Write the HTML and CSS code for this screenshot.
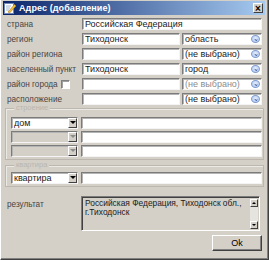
FILE: index.html
```html
<!DOCTYPE html>
<html lang="ru">
<head>
    <meta charset="UTF-8">
    <title>Адрес (добавление)</title>
    <link rel="stylesheet" href="styles.css">
</head>
<body>
    <div class="window">
        <div class="titlebar">
            <svg class="app-icon" width="12" height="12" viewBox="0 0 12 12">
                <rect x="0.5" y="1.5" width="9" height="10" fill="#ffffff" stroke="#6f86b8"/>
                <line x1="2" y1="4" x2="7" y2="4" stroke="#9fb2d8"/>
                <line x1="2" y1="6" x2="6" y2="6" stroke="#9fb2d8"/>
                <line x1="2" y1="8" x2="5" y2="8" stroke="#9fb2d8"/>
                <path d="M4 10 L10.5 2.5 L12 4 L5.5 11 Z" fill="#f2c23a" stroke="#b07818" stroke-width="0.6"/>
            </svg>
            <span class="title">Адрес (добавление)</span>
            <span class="close">×</span>
        </div>

        <div class="form">
            <div class="row">
                <span class="label">страна</span>
                <div class="field span2">Российская Федерация</div>
            </div>
            <div class="row">
                <span class="label">регион</span>
                <div class="field">Тиходонск</div>
                <div class="combo"><span>область</span><i class="drop"></i></div>
            </div>
            <div class="row">
                <span class="label">район региона</span>
                <div class="field"></div>
                <div class="combo"><span>(не выбрано)</span><i class="drop"></i></div>
            </div>
            <div class="row">
                <span class="label">населенный пункт</span>
                <div class="field">Тиходонск</div>
                <div class="combo"><span>город</span><i class="drop"></i></div>
            </div>
            <div class="row">
                <span class="label">район города <i class="check"></i></span>
                <div class="field"></div>
                <div class="combo off"><span>(не выбрано)</span><i class="drop"></i></div>
            </div>
            <div class="row">
                <span class="label">расположение</span>
                <div class="field"></div>
                <div class="combo"><span>(не выбрано)</span><i class="drop"></i></div>
            </div>

            <!-- дом / строение -->
            <div class="group first">
                <span class="legend">строение</span>
                <div class="grow">
                    <div class="select"><span>дом</span><i class="arrow"></i></div>
                    <div class="field"></div>
                </div>
                <div class="grow">
                    <div class="select off"><span></span><i class="arrow"></i></div>
                    <div class="field"></div>
                </div>
                <div class="grow">
                    <div class="select off"><span></span><i class="arrow"></i></div>
                    <div class="field"></div>
                </div>
            </div>

            <!-- квартира -->
            <div class="group second">
                <span class="legend">квартира</span>
                <div class="grow">
                    <div class="select"><span>квартира</span><i class="arrow"></i></div>
                    <div class="field"></div>
                </div>
            </div>

            <div class="result-row">
                <span class="label">результат</span>
                <div class="result">
                    <div class="result-text">Российская Федерация, Тиходонск обл., г.Тиходонск</div>
                    <div class="scroll">
                        <i class="sbtn up"></i>
                        <i class="sbtn down"></i>
                    </div>
                </div>
            </div>

            <div class="actions">
                <button type="button" class="ok">Ok</button>
            </div>
        </div>
    </div>
</body>
</html>
```

FILE: styles.css
```css
body {
    margin: 0;
    font-family: "Liberation Sans", Arial, sans-serif;
    font-size: 9px;
    color: #000000;
}
.window {
    width: 269px;
    height: 260px;
    box-sizing: border-box;
    background-color: #d4d0c8;
    border-left: 1px solid #ffffff;
    border-right: 1px solid #404040;
    border-bottom: 1px solid #404040;
    box-shadow: inset -1px -1px #808080;
    padding: 1px 3px 0 2px;
}
.titlebar {
    height: 14px;
    display: flex;
    align-items: center;
    gap: 3px;
    padding: 0 2px 0 1px;
    background: linear-gradient(to right, #0a246a, #a6caf0);
    color: #ffffff;
    font-weight: bold;
}
.app-icon {
    flex: none;
}
.title {
    flex: 1;
    font-size: 9px;
    letter-spacing: 0.1px;
}
.close {
    width: 10px;
    height: 10px;
    line-height: 9px;
    text-align: center;
    background-color: #d4d0c8;
    color: #000000;
    font-size: 10px;
    font-weight: bold;
    border: 1px solid;
    border-color: #ffffff #404040 #404040 #ffffff;
    box-sizing: border-box;
}
.form {
    padding: 3px 0 0 4px;
}
.row {
    display: grid;
    grid-template-columns: 75px 98px 82px;
    height: 12px;
    margin-bottom: 3px;
    align-items: center;
}
.label {
    color: #454545;
    font-size: 8.2px;
    display: flex;
    align-items: center;
    white-space: nowrap;
}
.check {
    width: 9px;
    height: 9px;
    margin-left: 3px;
    box-sizing: border-box;
    background-color: #ffffff;
    border: 1px solid;
    border-color: #808080 #ffffff #ffffff #808080;
    box-shadow: inset 1px 1px #a0a0a0;
}
.field, .combo, .select {
    height: 12px;
    box-sizing: border-box;
    background-color: #ffffff;
    border: 1px solid;
    border-color: #7b7b7b #f4f4f4 #f4f4f4 #7b7b7b;
    box-shadow: inset 1px 1px #b4b4b4;
    padding: 0 2px;
    line-height: 10px;
    white-space: nowrap;
    overflow: hidden;
    color: #1a1a1a;
}
.span2 {
    grid-column: 2 / 4;
}
.combo {
    margin-left: 2px;
    display: flex;
    align-items: center;
    justify-content: space-between;
    padding-right: 1px;
}
.combo.off span {
    color: #8c8c8c;
}
.drop {
    width: 9px;
    height: 8px;
    border-radius: 50%;
    background: radial-gradient(circle at 50% 40%, #e6eefc, #a9c0ea);
    border: 1px solid #7f9dd2;
    box-sizing: border-box;
    position: relative;
}
.drop::after {
    content: "";
    position: absolute;
    left: 2px;
    top: 2px;
    width: 3px;
    height: 2px;
    border-bottom: 1px solid #2d4f91;
    border-right: 1px solid #2d4f91;
    transform: rotate(45deg) scale(0.6);
}
.group {
    position: relative;
    margin: 0 1px 0 -2px;
    border: 1px solid #bcb8b0;
    box-shadow: inset 1px 1px #ebe9e4;
    padding: 0 1px 0 5px;
}
.group.first {
    padding-top: 8px;
    padding-bottom: 2px;
}
.group.second {
    margin-top: 5px;
    padding-top: 6px;
    padding-bottom: 2px;
}
.legend {
    position: absolute;
    top: -6px;
    left: 8px;
    padding: 0 2px;
    background-color: #d4d0c8;
    color: #bab6ae;
    font-size: 7.5px;
}
.grow {
    display: grid;
    grid-template-columns: 67px 1fr;
    column-gap: 3px;
    height: 12px;
    margin-bottom: 2px;
}
.grow:last-child {
    margin-bottom: 0;
}
.select {
    display: flex;
    align-items: center;
    justify-content: space-between;
    padding-right: 0;
}
.select.off {
    background-color: #d4d0c8;
}
.arrow {
    width: 9px;
    height: 10px;
    box-sizing: border-box;
    background-color: #d4d0c8;
    border: 1px solid;
    border-color: #ffffff #404040 #404040 #ffffff;
    position: relative;
}
.arrow::after {
    content: "";
    position: absolute;
    left: 1px;
    top: 2px;
    border-left: 3px solid transparent;
    border-right: 3px solid transparent;
    border-top: 3px solid #000000;
}
.select.off .arrow::after {
    border-top-color: #8c8c8c;
}
.result-row {
    display: grid;
    grid-template-columns: 74px 179px;
    margin-top: 9px;
    height: 35px;
}
.result-row .label {
    align-self: start;
    margin-top: 4px;
}
.result {
    display: flex;
    box-sizing: border-box;
    height: 35px;
    border: 1px solid;
    border-color: #7b7b7b #ffffff #ffffff #7b7b7b;
    box-shadow: inset 1px 1px #404040;
    padding: 2px 1px 1px 3px;
}
.result-text {
    flex: 1;
    font-size: 8.4px;
    line-height: 9px;
    color: #1a1a1a;
}
.scroll {
    width: 8px;
    display: flex;
    flex-direction: column;
    justify-content: space-between;
    background-color: #e6e4df;
}
.sbtn {
    height: 8px;
    box-sizing: border-box;
    background-color: #d4d0c8;
    border: 1px solid;
    border-color: #ffffff #404040 #404040 #ffffff;
    position: relative;
}
.sbtn::after {
    content: "";
    position: absolute;
    left: 1px;
    border-left: 2px solid transparent;
    border-right: 2px solid transparent;
}
.sbtn.up::after {
    top: 2px;
    border-bottom: 2px solid #000000;
}
.sbtn.down::after {
    top: 2px;
    border-top: 2px solid #000000;
}
.actions {
    display: flex;
    justify-content: flex-end;
    margin-top: 4px;
    padding-right: 3px;
}
.ok {
    width: 50px;
    height: 16px;
    padding: 0;
    font-family: "Liberation Sans", Arial, sans-serif;
    font-size: 9px;
    background-color: #d4d0c8;
    border: 1px solid;
    border-color: #ffffff #404040 #404040 #ffffff;
    box-shadow: inset -1px -1px #808080;
}
```
